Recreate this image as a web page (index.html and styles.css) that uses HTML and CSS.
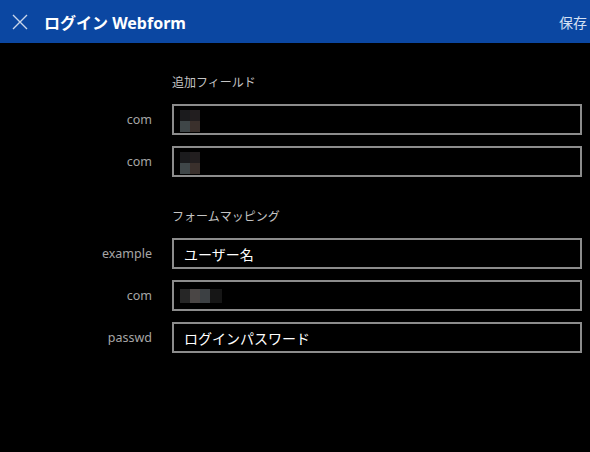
FILE: index.html
```html
<!DOCTYPE html>
<html>
<head>
    <title>ログイン Webform</title>
    <link rel="stylesheet" href="styles.css">
</head>
<body>
    <div class="top-bar">
        <button class="close-button" aria-label="閉じる">
            <svg width="16" height="16" viewBox="0 0 16 16">
                <path d="M1 1 L15 15 M15 1 L1 15" stroke="#c9d6ea" stroke-width="1.4" fill="none"/>
            </svg>
        </button>
        <h1>ログイン Webform</h1>
        <button class="save-button">保存</button>
    </div>

    <div class="container">
        <div class="section">
            <div class="section-title">追加フィールド</div>
            <div class="row">
                <label>com</label>
                <div class="field"><span class="blur blur-a"></span></div>
            </div>
            <div class="row">
                <label>com</label>
                <div class="field"><span class="blur blur-a"></span></div>
            </div>
        </div>

        <div class="section">
            <div class="section-title">フォームマッピング</div>
            <div class="row">
                <label>example</label>
                <div class="field">ユーザー名</div>
            </div>
            <div class="row">
                <label>com</label>
                <div class="field"><span class="blur blur-b"></span></div>
            </div>
            <div class="row">
                <label>passwd</label>
                <div class="field">ログインパスワード</div>
            </div>
        </div>
    </div>
</body>
</html>
```

FILE: styles.css
```css
body {
    font-family: "Noto Sans", "Noto Sans CJK JP", sans-serif;
    background-color: #000;
    margin: 0;
    padding: 0;
}

.top-bar {
    display: flex;
    align-items: center;
    height: 43px;
    background-color: #0b47a2;
    color: #fff;
}

.close-button {
    display: flex;
    align-items: center;
    justify-content: center;
    width: 38px;
    height: 43px;
    padding: 0 0 0 2px;
    background: none;
    border: none;
}

.top-bar h1 {
    flex: 1;
    margin: 0 0 0 6px;
    font-size: 16px;
    font-weight: bold;
}

.save-button {
    background: none;
    border: none;
    color: #d4e1f4;
    font-family: inherit;
    font-size: 14px;
    padding: 0 3px 0 0;
}

.container {
    padding-top: 31px;
}

.section {
    display: flex;
    flex-direction: column;
    gap: 11px;
    margin-bottom: 31px;
}

.section-title {
    margin-left: 172px;
    margin-bottom: 2px;
    height: 17px;
    line-height: 17px;
    font-size: 12px;
    color: #c4c4c4;
}

.row {
    display: flex;
    align-items: center;
    gap: 20px;
}

.row label {
    width: 152px;
    text-align: right;
    font-size: 12.5px;
    color: #a6a6a6;
}

.field {
    display: flex;
    align-items: center;
    width: 386px;
    height: 27px;
    padding: 0 10px;
    border: 2px solid #8c8c8c;
    color: #fff;
    font-size: 14px;
}

.blur {
    display: block;
}

.blur-a {
    width: 20px;
    height: 22px;
    margin-left: -4px;
    margin-top: 2px;
    background:
        linear-gradient(#1b1b1d, #1b1b1d) 0 0 / 10px 11px no-repeat,
        linear-gradient(#221e1f, #221e1f) 10px 0 / 10px 11px no-repeat,
        linear-gradient(#3f4648, #3f4648) 0 11px / 10px 11px no-repeat,
        linear-gradient(#3a302c, #3a302c) 10px 11px / 10px 11px no-repeat;
}

.blur-b {
    width: 42px;
    height: 14px;
    margin-left: -4px;
    background:
        linear-gradient(#262626, #262626) 0 0 / 10px 14px no-repeat,
        linear-gradient(#4a4645, #4a4645) 10px 0 / 10px 14px no-repeat,
        linear-gradient(#3c4043, #3c4043) 20px 0 / 10px 14px no-repeat,
        linear-gradient(#161616, #161616) 30px 0 / 12px 14px no-repeat;
}
```
